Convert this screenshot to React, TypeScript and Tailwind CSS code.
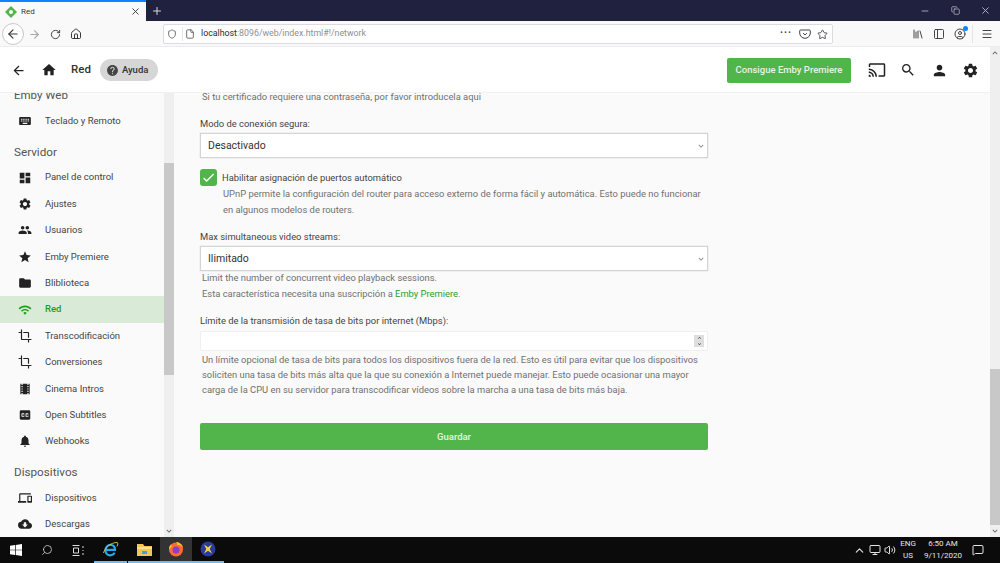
import React from 'react';
import {
  MdArrowBack, MdHome, MdHelp, MdCast, MdSearch, MdPerson, MdSettings, MdKeyboard, MdDashboard,
  MdPeople, MdStar, MdFolder, MdWifi, MdCrop, MdLocalMovies, MdClosedCaption, MdNotifications,
  MdDevices, MdCloudDownload, MdCheck, MdKeyboardArrowDown, MdKeyboardArrowUp,
} from 'react-icons/md';
import {
  ArrowLeft, ArrowRight, RotateCw, Home, Shield, File, Star, Library, PanelLeft, CircleUser, Menu, X, Plus, Minus,
  Search, ChevronUp, Monitor, Volume2, MessageSquare, Copy,
} from 'lucide-react';

const sections = [
  { title: 'Emby Web', size: 'text-[11.5px]', items: [{ label: 'Teclado y Remoto', icon: MdKeyboard }] },
  {
    title: 'Servidor',
    size: 'text-[11.7px]',
    items: [
      { label: 'Panel de control', icon: MdDashboard },
      { label: 'Ajustes', icon: MdSettings },
      { label: 'Usuarios', icon: MdPeople },
      { label: 'Emby Premiere', icon: MdStar },
      { label: 'Bliblioteca', icon: MdFolder },
      { label: 'Red', icon: MdWifi, active: true },
      { label: 'Transcodificación', icon: MdCrop },
      { label: 'Conversiones', icon: MdCrop },
      { label: 'Cinema Intros', icon: MdLocalMovies },
      { label: 'Open Subtitles', icon: MdClosedCaption },
      { label: 'Webhooks', icon: MdNotifications },
    ],
  },
  {
    title: 'Dispositivos',
    size: 'text-[11.7px]',
    items: [
      { label: 'Dispositivos', icon: MdDevices },
      { label: 'Descargas', icon: MdCloudDownload },
    ],
  },
];

const EmbyLogo = () => (
  <svg width="12" height="12" viewBox="0 0 12 12">
    <path d="M6 0 12 6 6 12 0 6z" fill="#52b54b" />
    <circle cx="6" cy="6" r="2" fill="#fff" />
  </svg>
);

const Browser = () => (
  <>
    <div className="h-[21px] bg-[#20213f] flex items-stretch shrink-0">
      <div className="w-[146px] bg-[#f9f9fa] border-t-2 border-[#0a84ff] flex items-center pl-[5px] pr-[5px]">
        <EmbyLogo />
        <span className="ml-[4px] text-[8px] text-[#38383d] flex-1">Red</span>
        <X size={11} className="text-[#38383d]" />
      </div>
      <div className="w-[21px] flex items-center justify-center">
        <Plus size={12} className="text-[#d8d8e0]" />
      </div>
      <div className="flex-1" />
      <div className="flex items-center text-[#b9bac8]">
        <div className="w-[30px] flex justify-center"><Minus size={10} /></div>
        <div className="w-[30px] flex justify-center"><Copy size={9} /></div>
        <div className="w-[30px] flex justify-center"><X size={11} /></div>
      </div>
    </div>
    <div className="h-[26px] pt-[1px] bg-[#f9f9fa] flex items-center shrink-0 border-b border-[#ececee]">
      <div className="w-[22px] h-[22px] ml-[2px] rounded-full border border-[#c9c9cc] bg-white flex items-center justify-center">
        <ArrowLeft size={14} className="text-[#38383d]" />
      </div>
      <ArrowRight size={13} className="ml-[4px] text-[#a8a8ac]" />
      <RotateCw size={11} className="ml-[9px] text-[#38383d]" />
      <Home size={12} className="ml-[9px] text-[#38383d]" />
      <div className="ml-[81px] w-[670px] h-[20px] bg-white border border-[#dcdce0] rounded-[2px] flex items-center pl-[3px] pr-[4px]">
        <Shield size={10} className="text-[#55555a]" />
        <div className="w-px h-[14px] bg-[#e4e4e6] ml-[5px]" />
        <File size={10} className="ml-[2px] text-[#55555a]" />
        <span className="ml-[6px] text-[8.8px] text-[#8f8f94] flex-1">
          <span className="text-[#2a2a2e]">localhost</span>:8096/web/index.html#!/network
        </span>
        <span className="text-[10px] text-[#45454a] tracking-[1px] leading-none mb-[3px] font-bold">···</span>
        <svg width="12" height="12" viewBox="0 0 12 12" className="ml-[7px] text-[#45454a]" fill="none" stroke="currentColor" strokeWidth="1">
          <path d="M1.500 2h9a.8.8 0 0 1 .8.8V5a5.300 5.300 0 0 1-10.600 0V2.800a.8.8 0 0 1 .8-.8z" />
          <path d="M4 5l2 2 2-2" />
        </svg>
        <Star size={11} className="ml-[6px] text-[#45454a]" />
      </div>
      <div className="flex-1" />
      <Library size={12} className="text-[#45454a]" />
      <PanelLeft size={12} className="ml-[9px] text-[#45454a]" />
      <div className="ml-[9px] relative">
        <CircleUser size={12} className="text-[#45454a]" />
        <div className="absolute -top-[2px] -right-[2px] w-[5px] h-[5px] rounded-full bg-[#0a84ff]" />
      </div>
      <div className="w-px h-[18px] bg-[#e4e4e6] ml-[6px]" />
      <Menu size={12} className="ml-[8px] mr-[7px] text-[#45454a]" />
    </div>
  </>
);

const PageHeader = () => (
  <div className="h-[46px] pt-[1px] bg-white flex items-center shrink-0 border-b border-[#f1f1f1] relative z-10">
    <MdArrowBack size={15} className="ml-[11px] text-[#222]" />
    <MdHome size={16} className="ml-[15px] text-[#222]" />
    <span className="ml-[14px] text-[11.5px] font-medium text-[#333]">Red</span>
    <div className="ml-[9px] h-[22px] w-[58px] rounded-full bg-[#d6d6d6] flex items-center pl-[6px]">
      <MdHelp size={13} className="text-[#444]" />
      <span className="ml-[3px] text-[9.5px] font-medium text-[#333]">Ayuda</span>
    </div>
    <div className="flex-1" />
    <div className="h-[25px] w-[124px] rounded-[2px] bg-[#52b54b] flex items-center justify-center text-[9.5px] font-medium text-[#e6f4e4]">
      Consigue Emby Premiere
    </div>
    <MdCast size={18} className="ml-[17px] text-[#222]" />
    <MdSearch size={16} className="ml-[14px] text-[#222]" />
    <MdPerson size={17} className="ml-[15px] text-[#222]" />
    <MdSettings size={17} className="ml-[14px] mr-[11px] text-[#222]" />
  </div>
);

const Sidebar = () => (
  <div className="w-[164px] bg-[#fafafa] shrink-0">
    <div className="-mt-[9px]">
      {sections.map((s, i) => (
        <div key={s.title} className={i === 0 ? '' : 'mt-[6px]'}>
          <div className={`h-[24px] pl-[14px] flex items-center text-[#555] ${s.size}`}>{s.title}</div>
          {s.items.map((item) => {
            const Icon = item.icon;
            return (
              <div
                key={item.label}
                className={`h-[26.4px] flex items-center pl-[18px] text-[9.5px] ${item.active ? 'bg-[#d9ebd6] text-[#1f9c1a] font-medium' : 'text-[#444]'}`}
              >
                <Icon size={14} className={item.active ? 'text-[#1f9c1a]' : 'text-[#222]'} />
                <span className="ml-[13px]">{item.label}</span>
              </div>
            );
          })}
        </div>
      ))}
    </div>
  </div>
);

const SelectBox = ({ value }: { value: string }) => (
  <div className="h-[25px] bg-white border border-[#d4d4d4] flex items-center pl-[7px] pr-[1px] text-[10.5px] text-[#333] shadow-[0_0_1px_#bbb]">
    <span className="flex-1">{value}</span>
    <MdKeyboardArrowDown size={10} className="text-[#888]" />
  </div>
);

const Form = () => (
  <div className="flex-1 bg-[#fafafa] pl-[26px]">
    <div className="w-[508px]">
      <p className="mt-[1px] h-[6px] pl-[2px] text-[9.4px] leading-[6px] text-[#707070]">Si tu certificado requiere una contraseña, por favor introducela aqui</p>
      <label className="block mt-[18px] text-[9.4px] leading-[12px] text-[#444]">Modo de conexión segura:</label>
      <div className="mt-[3px]"><SelectBox value="Desactivado" /></div>
      <div className="mt-[11px] flex">
        <div className="w-[17px] h-[17px] rounded-[3px] bg-[#52b54b] flex items-center justify-center shrink-0">
          <MdCheck size={15} className="text-white" />
        </div>
        <div className="ml-[5px] flex-1 pt-[1px]">
          <div className="text-[9.4px] leading-[16px] text-[#444]">Habilitar asignación de puertos automático</div>
          <p className="ml-[1px] text-[9.4px] leading-[15.5px] text-[#707070]">UPnP permite la configuración del router para acceso externo de forma fácil y automática. Esto puede no funcionar en algunos modelos de routers.</p>
        </div>
      </div>
      <label className="block mt-[14px] text-[9.4px] leading-[12px] text-[#444]">Max simultaneous video streams:</label>
      <div className="mt-[3px]"><SelectBox value="Ilimitado" /></div>
      <p className="-mt-[1px] pl-[2px] text-[9.4px] leading-[15.5px] text-[#707070]">
        Limit the number of concurrent video playback sessions.
        <br />
        Esta característica necesita una suscripción a <span className="text-[#2a9d25]">Emby Premiere</span>.
      </p>
      <label className="block mt-[14px] text-[9.4px] leading-[12px] text-[#444]">Límite de la transmisión de tasa de bits por internet (Mbps):</label>
      <div className="mt-[4px] h-[20px] bg-white border border-[#f0f0f0] rounded-[2px] flex items-center justify-end pr-[3px]">
        <div className="w-[10px] h-[12px] bg-[#dedede] flex flex-col items-center justify-center text-[#222]">
          <MdKeyboardArrowUp size={7} />
          <MdKeyboardArrowDown size={7} />
        </div>
      </div>
      <p className="pt-[0.5px] pl-[2px] text-[9.4px] leading-[15.3px] text-[#707070]">
        Un límite opcional de tasa de bits para todos los dispositivos fuera de la red. Esto es útil para evitar que los dispositivos soliciten una tasa de bits más alta que la que su conexión a Internet puede manejar. Esto puede ocasionar una mayor carga de la CPU en su servidor para transcodificar vídeos sobre la marcha a una tasa de bits más baja.
      </p>
      <div className="mt-[25.5px] h-[27.5px] rounded-[2px] bg-[#52b54b] flex items-center justify-center text-[9.5px] font-medium text-[#e6f4e4]">
        Guardar
      </div>
    </div>
  </div>
);

const Scrollbar = ({ before, thumb, arrowUp }: { before: string; thumb: string; arrowUp?: boolean }) => (
  <div className="w-[10px] bg-[#efefef] shrink-0 flex flex-col">
    <div className={before}>
      {arrowUp && <MdKeyboardArrowUp size={10} className="mt-[1px] text-[#666]" />}
    </div>
    <div className={`${thumb} bg-[#c8c8c8]`} />
    <div className="flex-1" />
    <div className="h-[12px] flex items-center justify-center">
      <MdKeyboardArrowDown size={10} className="text-[#666]" />
    </div>
  </div>
);

const Taskbar = () => (
  <div className="h-[26px] bg-[#0b0b0b] flex items-stretch shrink-0 relative z-10">
    <div className="w-[31px] flex items-center justify-center">
      <svg width="12" height="12" viewBox="0 0 12 12" fill="#fff">
        <path d="M0 1.700 5 1v4.700H0zM5.700.9 12 0v5.700H5.700zM0 6.300h5V11l-5-.7zM5.700 6.300H12V12l-6.300-.9z" />
      </svg>
    </div>
    <div className="w-[31px] flex items-center justify-center">
      <Search size={12} strokeWidth={1.5} className="text-[#ddd] -scale-x-100" />
    </div>
    <div className="w-[32px] flex items-center justify-center">
      <svg width="13" height="11" viewBox="0 0 13 11" fill="none" stroke="#ddd">
        <path d="M.5.500h7M.5 10.500h7M1.500 3h5v5h-5zM11 1v2M11 5v1M11 8v2" />
      </svg>
    </div>
    <div className="w-[33px] flex items-center justify-center border-b-2 border-[#76b9ed]">
      <svg width="17" height="17" viewBox="0 0 17 17" fill="none">
        <path d="M3.500 8.800h9.500C13 5.500 11 3.800 8.600 3.800 5.600 3.800 3.500 6.300 3.500 9.300c0 3 2.200 5 4.800 5 1.900 0 3.400-.9 4.300-2.500" stroke="#2aa7e8" strokeWidth="2.200" />
        <path d="M1.500 12C3 6.500 9 1.500 15 1.500c1.200 0 1 2 0 4" stroke="#f3c23c" strokeWidth=".9" />
      </svg>
    </div>
    <div className="w-[32px] flex items-center justify-center border-b-2 border-[#76b9ed] ml-[1px]">
      <svg width="15" height="13" viewBox="0 0 15 13">
        <path d="M0 1h6l1.500 2H15v10H0z" fill="#f5c64f" />
        <path d="M0 4h15v2H0z" fill="#fbe08a" />
        <path d="M5 8h5v3H5z" fill="#3aa3dd" />
      </svg>
    </div>
    <div className="w-[32px] flex items-center justify-center bg-[#333] border-b-2 border-[#76b9ed]">
      <svg width="16" height="16" viewBox="0 0 16 16">
        <circle cx="8" cy="8.500" r="7" fill="#ff6a2e" />
        <circle cx="8" cy="9" r="3.500" fill="#8a3fc8" />
        <path d="M8 1c3.500 0 6.500 2.500 7 6-1.500-2.500-3.500-3.500-6-3 1-1 0-2-1-3zM1 8.500C1 6 2 4 3 3.500l1 2c-1.500 1-2 2-3 3z" fill="#ffc02e" />
      </svg>
    </div>
    <div className="w-[32px] flex items-center justify-center border-b-2 border-[#76b9ed]">
      <svg width="16" height="16" viewBox="0 0 16 16">
        <circle cx="8" cy="8" r="7.500" fill="#2b3a9e" />
        <path d="M4 3.500 8 6.300l4-2.800L9.700 8l2.300 4.500-4-2.800-4 2.800L6.300 8z" fill="#f5d33a" />
      </svg>
    </div>
    <div className="flex-1" />
    <div className="flex items-center text-[#e5e5e5]">
      <ChevronUp size={13} />
      <Monitor size={12} className="ml-[3px]" />
      <Volume2 size={12} className="ml-[3px]" />
      <div className="ml-[1px] w-[22px] text-center text-[8px] leading-[12px]">ENG<br />US</div>
      <div className="w-[48px] text-center text-[8px] leading-[12px]">6:50 AM<br />9/11/2020</div>
      <MessageSquare size={12} className="ml-[5px] mr-[16px]" />
    </div>
  </div>
);

export default function App() {
  return (
    <div className="w-[1000px] h-[563px] overflow-hidden flex flex-col [font-family:Roboto,sans-serif]">
      <Browser />
      <div className="flex-1 min-h-0 flex">
        <div className="flex-1 min-w-0 flex flex-col">
          <PageHeader />
          <div className="flex-1 min-h-0 flex">
            <Sidebar />
            <Scrollbar before="h-[70px]" thumb="h-[212px]" />
            <Form />
          </div>
        </div>
        <Scrollbar before="h-[322px]" thumb="h-[156px]" arrowUp />
      </div>
      <Taskbar />
    </div>
  );
}
